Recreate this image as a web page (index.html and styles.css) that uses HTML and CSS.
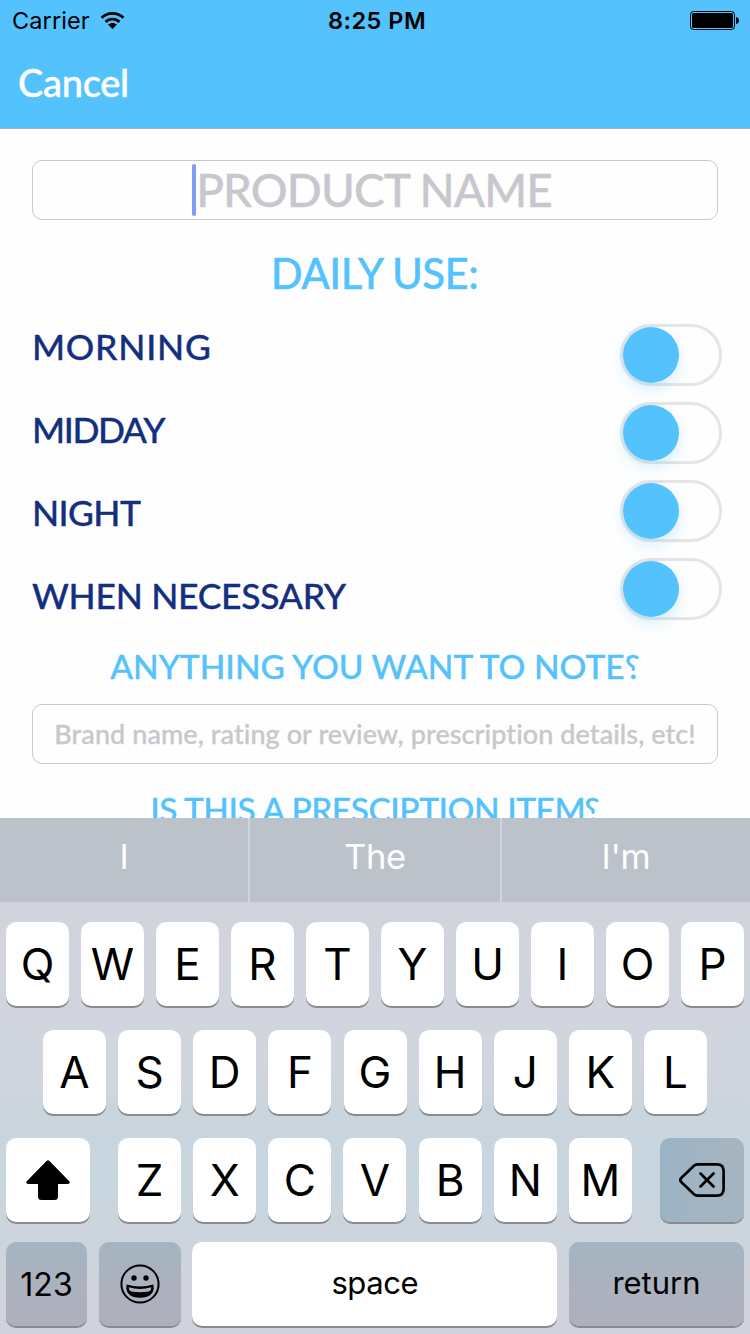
FILE: index.html
```html
<!DOCTYPE html>
<html lang="en">
<head>
<meta charset="utf-8">
<title>Add product</title>
<link rel="stylesheet" href="styles.css">
</head>
<body>
<div class="screen">
  <header class="header">
    <div class="status">
      <div class="carrier"><span class="carrier-name">Carrier</span>
        <svg class="wifi" width="25" height="19" viewBox="0 0 26 20"><g fill="none" stroke="#000" stroke-width="3"><path d="M1.5 7.2C8 .9 18 .9 24.500 7.200"/><path d="M5.700 11.500C9.800 7.500 16.200 7.500 20.300 11.500"/></g><path d="M8.300 14.300C11 11.900 15 11.900 17.700 14.300L13 19z"/></svg>
      </div>
      <div class="clock">8:25 PM</div>
      <svg class="battery" width="49" height="19" viewBox="0 0 49 19"><rect x=".5" y=".5" width="44" height="18" rx="3" fill="none" stroke="#000"/><rect x="2" y="2" width="41" height="15" rx="1.500"/><path d="M46 6c4 .5 4 6.500 0 7z"/></svg>
    </div>
    <div class="nav"><span class="cancel">Cancel</span></div>
  </header>

  <main class="form">
    <div class="field field-name"><span class="caret"></span><span class="ph-name">PRODUCT NAME</span></div>
    <h1 class="title"><span>DAILY USE:</span></h1>
    <section class="usage">
      <div class="labels">
        <div class="label l1">MORNING</div>
        <div class="label l2">MIDDAY</div>
        <div class="label l3">NIGHT</div>
        <div class="label l4">WHEN NECESSARY</div>
      </div>
      <div class="switches">
        <div class="switch"><i class="knob"></i></div>
        <div class="switch"><i class="knob"></i></div>
        <div class="switch"><i class="knob"></i></div>
        <div class="switch"><i class="knob"></i></div>
      </div>
    </section>
    <h2 class="question q1">ANYTHING YOU WANT TO NOTE<span class="mark">?</span></h2>
    <div class="field field-note"><span>Brand name, rating or review, prescription details, etc!</span></div>
    <h2 class="question q2">IS THIS A PRESCIPTION ITEM<span class="mark">?</span></h2>
  </main>

  <div class="keyboard">
    <div class="suggestions"><div>I</div><div>The</div><div>I'm</div></div>
    <div class="keys">
      <div class="row"><b class="key">Q</b><b class="key">W</b><b class="key">E</b><b class="key">R</b><b class="key">T</b><b class="key">Y</b><b class="key">U</b><b class="key">I</b><b class="key">O</b><b class="key">P</b></div>
      <div class="row row-home"><b class="key">A</b><b class="key">S</b><b class="key">D</b><b class="key">F</b><b class="key">G</b><b class="key">H</b><b class="key">J</b><b class="key">K</b><b class="key">L</b></div>
      <div class="row row-shift">
        <b class="key wide"><svg width="44" height="40" viewBox="0 0 44 40"><path d="M20.800.8q1.200-1.200 2.400 0L43.500 21.500q.8 2.500-1.500 2.500H32v12.500q0 3.500-3.500 3.500h-13q-3.500 0-3.500-3.500V24H2q-2.300 0-1.500-2.500z"/></svg></b>
        <div class="letters"><b class="key">Z</b><b class="key">X</b><b class="key">C</b><b class="key">V</b><b class="key">B</b><b class="key">N</b><b class="key">M</b></div>
        <b class="key wide dark delete"><svg width="46" height="34" viewBox="0 0 46 34"><g fill="none" stroke="#000" stroke-width="2.700" stroke-linejoin="round" stroke-linecap="round"><path d="M18.500 1.400H38Q44.600 1.400 44.600 8V26Q44.600 32.600 38 32.600H18.500Q16.500 32.600 15 31.200L2.200 19Q.4 17 2.200 15L15 2.800Q16.500 1.400 18.500 1.400z"/><path d="M21.500 10.500l13 13m0-13l-13 13"/></g></svg></b>
      </div>
      <div class="row row-bottom">
        <b class="key dark numbers">123</b>
        <b class="key dark emoji"><svg width="40" height="40" viewBox="0 0 40 40"><circle cx="20" cy="20" r="18.600" fill="none" stroke="#000" stroke-width="2"/><circle cx="14" cy="14" r="2.700"/><circle cx="26" cy="14" r="2.700"/><path fill-rule="evenodd" d="M6.500 20.500Q20 24.500 33.500 20.500Q35 30 27 32.700Q20 35 13 32.700Q5 30 6.500 20.500zM8.500 23.300Q20 26.500 31.500 23.300Q31 26 29.500 27.200Q20 29.300 10.500 27.200Q9 26 8.500 23.300z"/></svg></b>
        <b class="key space">space</b>
        <b class="key dark return">return</b>
      </div>
    </div>
  </div>
</div>
</body>
</html>
```
FILE: styles.css
```css
* { box-sizing: border-box; }
body { margin: 0; background: #fefefe; }
.screen {
  width: 750px; height: 1334px; overflow: hidden;
  display: flex; flex-direction: column;
  font-family: Lato, "Liberation Sans", sans-serif; font-weight: 500;
  font-variant-ligatures: none;
}
h1, h2 { margin: 0; font-weight: 500; }
span, .label { white-space: nowrap; }

.header { height: 129px; background: #54c2fc; border-bottom: 1px solid #acb4b8; }
.status {
  height: 41px; display: grid; grid-template-columns: 1fr auto 1fr; align-items: center;
  padding: 0 11px 0 12px; font: 400 24px/42px Inter, sans-serif;
}
.carrier { display: flex; align-items: center; gap: 10px; }
.carrier-name { font-size: 23.500px; letter-spacing: .1px; }
.wifi { margin-top: -2px; }
.clock { font-weight: 600; font-size: 23.500px; letter-spacing: .5px; padding-left: 3px; }
.battery { justify-self: end; margin-bottom: 2px; }
.nav { height: 87px; padding-left: 18px; font-size: 38px; line-height: 82px; color: #fff; }
.cancel { letter-spacing: -.3px; -webkit-text-stroke: .4px; }

.form { height: 689px; padding: 31px 32px 0; overflow: hidden; color: #54c2fc; -webkit-text-stroke: .3px; }
.field {
  height: 60px; border: 1px solid #c9c9cb; border-radius: 10px; color: #c8c7cd;
  display: flex; justify-content: center; align-items: center;
}
.field-name { padding-right: 6px; }
.caret { width: 4px; height: 52px; border-radius: 2px; background: #819bf8; }
.ph-name { font-size: 46px; line-height: 56px; letter-spacing: -.9px; }
.title { font-size: 42px; line-height: 52px; height: 50px; margin-top: 27px; padding-right: 1px; text-align: center; letter-spacing: -.6px; }
.usage { display: flex; justify-content: space-between; margin-top: 8px; height: 337px; margin-right: -4px; }
.label { height: 83px; line-height: 83px; font-size: 35.500px; color: #142e80; }
.l1 { letter-spacing: .75px; }
.l2 { letter-spacing: -1.400px; }
.l3 { letter-spacing: -.6px; }
.l4 { letter-spacing: -.3px; }
.switches { display: flex; flex-direction: column; gap: 16px; padding-top: 19px; }
.switch { width: 102px; height: 62px; border: 3px solid #e5e5e5; border-radius: 31px; }
.knob { display: block; width: 56px; height: 56px; border-radius: 50%; background: #54c2fc; box-shadow: 0 6px 14px rgba(84,194,252,.25); }
.question { font-size: 33.500px; line-height: 40px; height: 40px; text-align: center; white-space: nowrap; }
.q1 { margin-top: 4px; }
.mark { display: inline-block; transform: scaleX(-1); }
.field-note { margin-top: 18px; font-size: 27px; letter-spacing: .07px; padding-bottom: 2px; }
.q2 { margin-top: 25px; letter-spacing: -.47px; }

.keyboard { height: 516px; font-family: Inter, sans-serif; font-weight: 400; }
.suggestions {
  height: 84px; display: grid; grid-template-columns: 248px 250px 248px; gap: 2px;
  background: #d1d5dd; color: #fff; font-size: 34.500px; line-height: 77px; text-align: center; letter-spacing: -.3px;
}
.suggestions div { background: #bbc2ca; }
.keys {
  height: 432px; padding: 20px 6px 0; display: flex; flex-direction: column; gap: 24px;
  background: linear-gradient(#d1d4dc 0, #d1d5dd 38%, #cad5de 50%, #c7d6df 65%, #cbd4dd 76%, #d1d3dc 92%);
}
.row, .letters { display: flex; justify-content: space-between; }
.row { height: 84px; }
.row-home { padding: 0 37px; }
.row-bottom { margin-top: -4px; }
.letters { width: 514px; }
.key {
  width: 63px; height: 84px; border-radius: 10px; background: #fff; color: #000;
  box-shadow: 0 2px 0 #888b90; font-weight: 400; font-size: 44px;
  display: flex; align-items: center; justify-content: center;
}
.wide { width: 84px; }
.dark { background: linear-gradient(#a5b4c1, #adb1bd 65%); }
.delete { background: linear-gradient(100deg, #99b4c5, #a5b4c1 70%); }
.numbers { width: 81px; font-size: 32px; }
.emoji { width: 82px; }
.space { width: 365px; font-size: 31px; letter-spacing: -.4px; padding-bottom: 3px; }
.return { width: 175px; font-size: 31px; padding-bottom: 3px; }
```
